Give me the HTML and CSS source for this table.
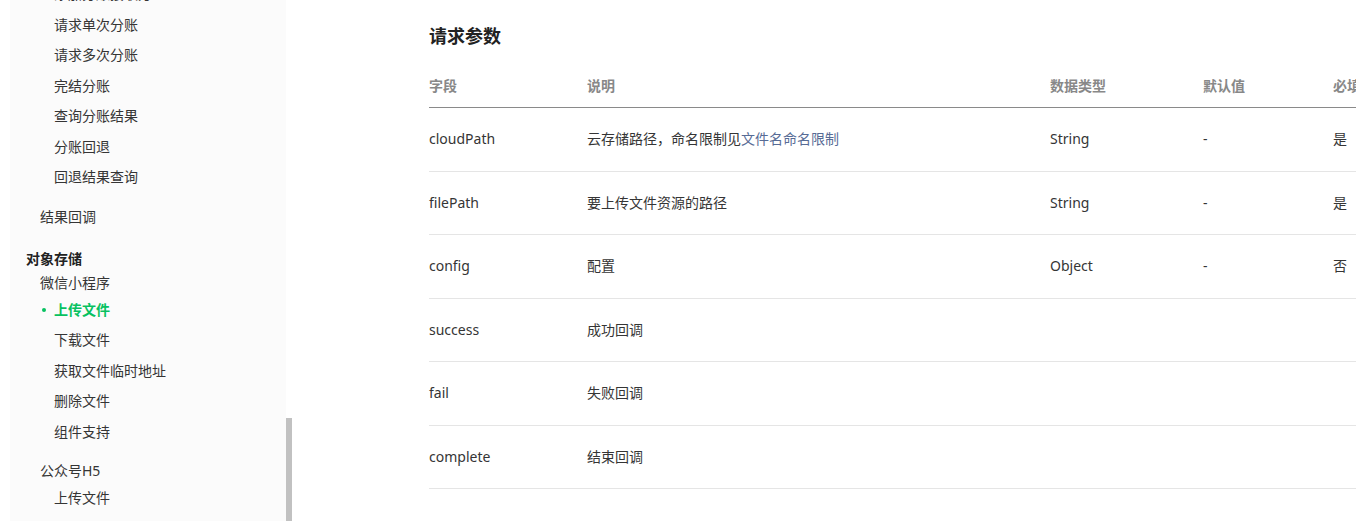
FILE: index.html
```html
<!DOCTYPE html>
<html lang="zh-CN">
<head>
<meta charset="utf-8">
<title>上传文件</title>
<link rel="stylesheet" href="styles.css">
</head>
<body>
<div class="page">
  <aside class="side-wrap">
    <nav class="sidebar">
      <ul class="sub first">
        <li>添加分账接收方</li>
        <li>请求单次分账</li>
        <li>请求多次分账</li>
        <li>完结分账</li>
        <li>查询分账结果</li>
        <li>分账回退</li>
        <li>回退结果查询</li>
      </ul>
      <div class="l2-title gap">结果回调</div>
      <div class="l1-title">对象存储</div>
      <div class="l2-title">微信小程序</div>
      <ul class="sub">
        <li class="active">上传文件</li>
        <li>下载文件</li>
        <li>获取文件临时地址</li>
        <li>删除文件</li>
        <li>组件支持</li>
      </ul>
      <div class="l2-title gap">公众号H5</div>
      <ul class="sub">
        <li>上传文件</li>
      </ul>
    </nav>
    <div class="scroll-thumb"></div>
  </aside>
  <main class="content">
    <h2 class="title">请求参数</h2>
    <table class="params">
      <colgroup>
        <col class="c1"><col class="c2"><col class="c3"><col class="c4"><col class="c5">
      </colgroup>
      <thead>
        <tr><th>字段</th><th>说明</th><th>数据类型</th><th>默认值</th><th>必填</th></tr>
      </thead>
      <tbody>
        <tr><td>cloudPath</td><td>云存储路径，命名限制见<a class="link" href="#">文件名命名限制</a></td><td>String</td><td>-</td><td>是</td></tr>
        <tr><td>filePath</td><td>要上传文件资源的路径</td><td>String</td><td>-</td><td>是</td></tr>
        <tr><td>config</td><td>配置</td><td>Object</td><td>-</td><td>否</td></tr>
        <tr><td>success</td><td>成功回调</td><td></td><td></td><td></td></tr>
        <tr><td>fail</td><td>失败回调</td><td></td><td></td><td></td></tr>
        <tr><td>complete</td><td>结束回调</td><td></td><td></td><td></td></tr>
      </tbody>
    </table>
  </main>
</div>
</body>
</html>
```

FILE: styles.css
```css
html, body {
  margin: 0;
  padding: 0;
  height: 100%;
  overflow: hidden;
  background: #ffffff;
}
body {
  font-family: "Noto Sans", "Noto Sans CJK SC", sans-serif;
  font-size: 14px;
  color: #353535;
}
.page {
  display: flex;
  height: 100vh;
}
.side-wrap {
  position: relative;
  flex: 0 0 292px;
  height: 100vh;
  overflow: hidden;
}
.sidebar {
  margin-left: 10px;
  width: 276px;
  height: 100%;
  background: #fbfbfb;
  overflow: hidden;
}
.scroll-thumb {
  position: absolute;
  left: 286px;
  top: 418px;
  bottom: 0;
  width: 6px;
  background: #c1c1c1;
}
.sub {
  list-style: none;
  margin: 0;
  padding: 0 0 0 44px;
}
.sub.first {
  margin-top: -21px;
}
.sub li {
  position: relative;
  height: 30.5px;
  line-height: 30.5px;
  white-space: nowrap;
}
.sub li.active {
  color: #07c160;
  font-weight: bold;
}
.sub li.active::before {
  content: "";
  position: absolute;
  left: -12px;
  top: 13px;
  width: 4px;
  height: 4px;
  border-radius: 50%;
  background: #07c160;
}
.l2-title {
  padding-left: 30px;
  line-height: 24px;
  height: 24px;
}
.l2-title.gap {
  margin-top: 12px;
}
.l1-title {
  margin-top: 18px;
  padding-left: 16px;
  line-height: 24px;
  height: 24px;
  font-weight: bold;
  color: #222;
}
.content {
  flex: 1 1 auto;
  min-width: 0;
  padding-left: 137px;
}
.title {
  margin: 23px 0 0;
  font-size: 18px;
  line-height: 26px;
  font-weight: bold;
  color: #222;
}
.params {
  margin-top: 16px;
  border-collapse: collapse;
  table-layout: fixed;
  width: 1054px;
}
.c1 { width: 158px; }
.c2 { width: 463px; }
.c3 { width: 153px; }
.c4 { width: 130px; }
.c5 { width: 150px; }
.params th {
  text-align: left;
  font-weight: bold;
  color: #888;
  padding: 10px 0;
  line-height: 22px;
  border-bottom: 1px solid #8a8a8a;
  white-space: nowrap;
}
.params td {
  padding: 20px 0;
  line-height: 22.5px;
  border-bottom: 1px solid #e5e5e5;
  white-space: nowrap;
}
.link {
  color: #576b95;
  text-decoration: none;
}
```
